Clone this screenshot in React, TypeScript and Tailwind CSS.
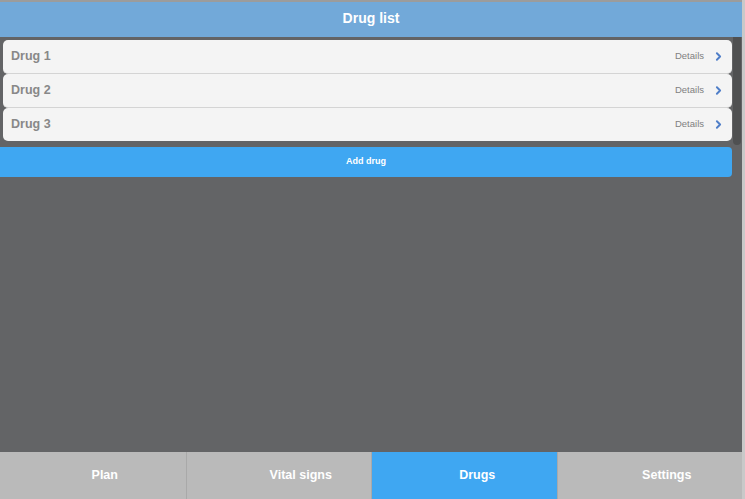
import { ChevronRight } from 'lucide-react';

const DRUGS = ['Drug 1', 'Drug 2', 'Drug 3'];

const TABS = [
  { label: 'Plan', pad: 'pl-[24px]' },
  { label: 'Vital signs', pad: 'pl-[44px]' },
  { label: 'Drugs', pad: 'pl-[26px]', active: true },
  { label: 'Settings', pad: 'pl-[34px]' },
];

export default function App() {
  return (
    <div className="flex h-[499px] w-[745px] overflow-hidden bg-[#c9c9c9] font-['Liberation_Sans',Arial,sans-serif]">
      <div className="flex w-[742px] flex-col">
        {/* Header */}
        <div className="flex h-[37px] items-center justify-center border-t-2 border-[#9c9c9c] pb-[2px] bg-[#72a9d9]">
          <span className="text-[14px] font-bold text-white">Drug list</span>
        </div>

        {/* Body */}
        <div className="relative flex-1 bg-[#636466]">
          <div className="absolute right-[1px] top-0 h-[108px] w-[8px] rounded-b bg-[#4f5051]" />

          <div className="pl-[3px] pr-[10px] pt-[3px]">
            {DRUGS.map((drug, i) => (
              <div
                key={drug}
                className={`flex items-center rounded-[5px] bg-[#f4f4f4] pl-[8px] pr-[7px] ${
                  i < DRUGS.length - 1 ? 'h-[34px] border-b border-[#d4d4d4]' : 'h-[33px]'
                }`}
              >
                <span className="flex-1 text-[12.5px] font-bold text-[#888888]">{drug}</span>
                <span className="text-[9.5px] text-[#808080]">Details</span>
                <ChevronRight className="ml-[8px] h-[13px] w-[13px] text-[#4f7ec8]" strokeWidth={3.5} />
              </div>
            ))}
          </div>

          <div className="mr-[10px] mt-[6px] flex h-[30px] items-center justify-center rounded-r-[4px] bg-[#3fa7f2]">
            <span className="text-[9px] font-bold text-white">Add drug</span>
          </div>
        </div>

        {/* Tab bar */}
        <div className="grid h-[47px] grid-cols-4 bg-[#bababa]">
          {TABS.map((tab, i) => (
            <div
              key={tab.label}
              className={`flex items-center justify-center ${tab.pad} ${
                i > 0 ? 'border-l border-[#a9a9a9]' : ''
              } ${tab.active ? 'bg-[#3fa7f2]' : ''}`}
            >
              <span className="text-[12.5px] font-bold text-white">{tab.label}</span>
            </div>
          ))}
        </div>
      </div>
    </div>
  );
}
